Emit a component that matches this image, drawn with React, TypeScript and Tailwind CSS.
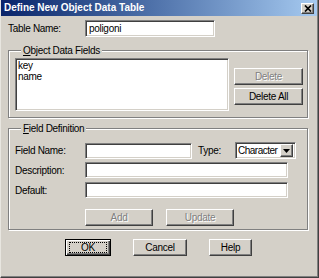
import type { ReactNode } from 'react';

const sunken =
  'border border-t-[#808080] border-l-[#808080] border-b-white border-r-white shadow-[inset_1px_1px_0_#404040,inset_-1px_-1px_0_#d4d0c8] bg-white';
const raised =
  'border border-t-white border-l-white border-b-[#404040] border-r-[#404040] shadow-[inset_-1px_-1px_0_#808080,inset_1px_1px_0_#d4d0c8] bg-[#d4d0c8]';
const etched =
  'border border-[#808080] shadow-[inset_1px_1px_0_#fff,1px_1px_0_#fff]';

function Btn({ children, w, disabled }: { children: ReactNode; w: string; disabled?: boolean }) {
  return (
    <div className={`${raised} ${w} h-[17px] flex items-center justify-center`}>
      <span className={disabled ? 'text-[#808080] [text-shadow:1px_1px_0_#fff]' : 'text-black'}>{children}</span>
    </div>
  );
}

function Field({ w }: { w: string }) {
  return <div className={`${sunken} ${w} h-[16px]`} />;
}

function Legend({ children }: { children: ReactNode }) {
  return <legend className="ml-[6px] px-[2px] leading-[13px] bg-[#d4d0c8]">{children}</legend>;
}

export default function App() {
  return (
    <div className="w-[319px] h-[278px] bg-[#d4d0c8] font-['Liberation_Sans',Arial,sans-serif] text-[10px] tracking-[-0.3px] text-black border-r border-b border-[#404040] border-l border-l-[#e8e6e0]">
      <div className="h-full flex flex-col border-r border-b border-[#808080]">
        {/* title bar */}
        <div className="h-[16px] flex items-center justify-between pl-[3px] pr-[3px] bg-gradient-to-r from-[#0a246a] to-[#a6caf0]">
          <span className="font-bold text-white leading-none tracking-normal">Define New Object Data Table</span>
          <div className={`${raised} w-[13px] h-[11px] flex items-center justify-center`}>
            <svg width="8" height="7" viewBox="0 0 8 7">
              <path d="M1 0.5L7 6.5M7 0.5L1 6.5" stroke="#000" strokeWidth="1.7" />
            </svg>
          </div>
        </div>

        {/* table name */}
        <div className="mt-[4px] flex items-center pl-[7px]">
          <span className="w-[77px]">Table Name:</span>
          <div className={`${sunken} w-[130px] h-[17px] flex items-center px-[3px]`}>poligoni</div>
        </div>

        {/* object data fields */}
        <fieldset className={`${etched} mt-[7px] ml-[7px] w-[300px] pl-[6px] pr-[4px] pb-[6px]`}>
          <Legend>
            <span className="underline">O</span>bject Data Fields
          </Legend>
          <div className="flex gap-[5px] mt-[1px]">
            <div className={`${sunken} w-[214px] h-[53px] px-[2px] py-[1px] leading-[11px]`}>
              <div>key</div>
              <div>name</div>
            </div>
            <div className="flex flex-col gap-[3px] pt-[10px]">
              <Btn w="w-[69px]" disabled>Delete</Btn>
              <Btn w="w-[69px]">Delete All</Btn>
            </div>
          </div>
        </fieldset>

        {/* field definition */}
        <fieldset className={`${etched} mt-[4px] ml-[7px] w-[300px] pl-[6px] pb-[3px]`}>
          <Legend>
            <span className="underline">F</span>ield Definition
          </Legend>
          <div className="flex flex-col mt-[7px]">
            <div className="flex items-center h-[17px]">
              <span className="w-[70px]">Field Name:</span>
              <Field w="w-[107px]" />
              <span className="ml-[6px] w-[37px]">Type:</span>
              <div className={`${sunken} w-[61px] h-[17px] flex items-center justify-between pl-[2px] pr-[2px]`}>
                <span className="tracking-[-0.5px]">Character</span>
                <div className={`${raised} w-[13px] h-[13px] flex items-center justify-center`}>
                  <svg width="7" height="4" viewBox="0 0 7 4">
                    <path d="M0 0H7L3.5 4Z" fill="#000" />
                  </svg>
                </div>
              </div>
            </div>
            <div className="flex items-center mt-[3px]">
              <span className="w-[70px]">Description:</span>
              <Field w="w-[203px]" />
            </div>
            <div className="flex items-center mt-[4px]">
              <span className="w-[70px]">Default:</span>
              <Field w="w-[203px]" />
            </div>
            <div className="flex gap-[13px] pl-[70px] mt-[11px]">
              <Btn w="w-[68px]" disabled>Add</Btn>
              <Btn w="w-[68px]" disabled>Update</Btn>
            </div>
          </div>
        </fieldset>

        {/* dialog buttons */}
        <div className="mt-[9px] flex pl-[64px] gap-[22px]">
          <div className="w-[46px] h-[17px] border border-black shadow-[inset_1px_1px_0_#fff,inset_-1px_-1px_0_#404040,inset_-2px_-2px_0_#808080] flex items-center justify-center px-[3px] py-[2px]">
            <div className="w-full h-full border border-dotted border-black flex items-center justify-center">OK</div>
          </div>
          <Btn w="w-[54px]">Cancel</Btn>
          <Btn w="w-[43px]">Help</Btn>
        </div>
      </div>
    </div>
  );
}
